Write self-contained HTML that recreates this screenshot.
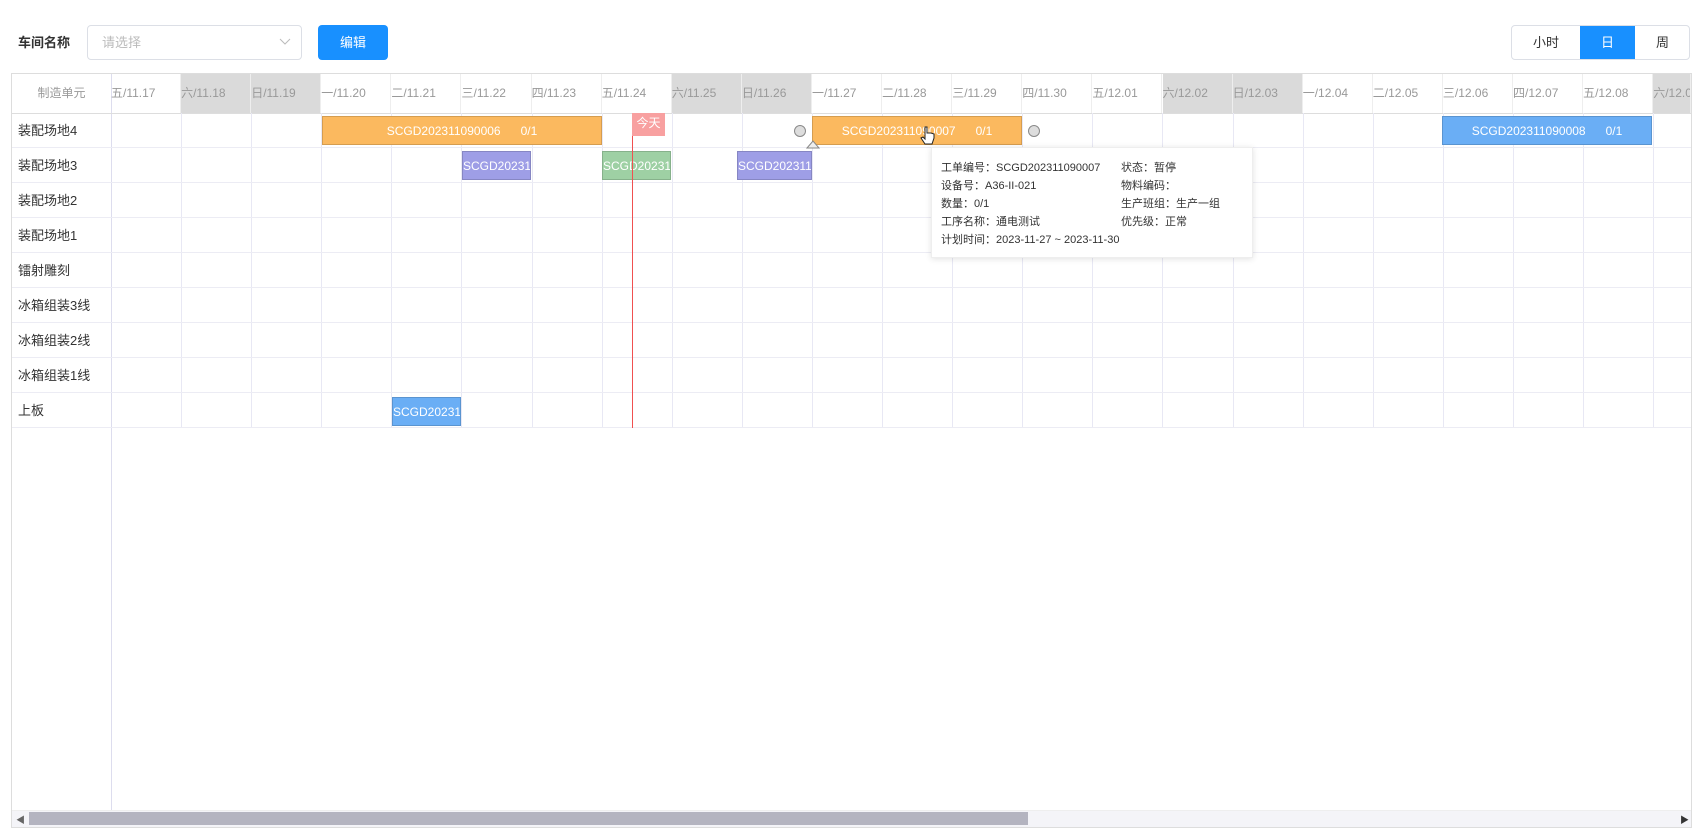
<!DOCTYPE html>
<html><head><meta charset="utf-8"><style>
*{box-sizing:border-box;margin:0;padding:0}
body{width:1706px;height:838px;background:#fff;font-family:"Liberation Sans","Noto Sans CJK SC",sans-serif;position:relative;overflow:hidden;font-size:13px;color:#333}
.a{position:absolute}
.bar{position:absolute;color:#fff;font-size:12px;line-height:28px;white-space:nowrap;overflow:hidden;text-align:center;border:1px solid rgba(0,0,0,.15)}
.hd{position:absolute;top:74px;height:39px;width:70px;line-height:39px;color:#999;font-size:12px;border-right:1px solid #eee;white-space:nowrap;overflow:hidden}
.lab{position:absolute;left:18px;font-size:13px;color:#333;line-height:35px}
.tt{position:absolute;font-size:11px;color:#333;white-space:nowrap}
</style></head><body>
<div class="a" style="left:18px;top:34px;font-size:13px;font-weight:bold;color:#333;line-height:18px">车间名称</div>
<div class="a" style="left:87px;top:25px;width:215px;height:35px;border:1px solid #dcdfe6;border-radius:4px"></div>
<div class="a" style="left:102px;top:34px;color:#bbb;font-size:13px;line-height:18px">请选择</div>
<svg class="a" style="left:279px;top:38px" width="12" height="8"><path d="M1 1 L6 6 L11 1" fill="none" stroke="#bbb" stroke-width="1"/></svg>
<div class="a" style="left:318px;top:25px;width:70px;height:35px;background:#1890ff;border-radius:4px;color:#fff;text-align:center;line-height:35px;font-size:13px">编辑</div>
<div class="a" style="left:1511px;top:25px;width:179px;height:35px;border:1px solid #dcdfe6;border-radius:4px;overflow:hidden">
<div class="a" style="left:0;top:0;width:68px;height:33px;line-height:33px;text-align:center">小时</div>
<div class="a" style="left:68px;top:0;width:55px;height:33px;line-height:33px;text-align:center;background:#1890ff;color:#fff">日</div>
<div class="a" style="left:123px;top:0;width:55px;height:33px;line-height:33px;text-align:center">周</div>
</div>
<!-- table -->
<div class="a" style="left:11px;top:73px;width:1681px;height:755px;border:1px solid #ddd;overflow:hidden" id="t">
</div>
<svg class="a" style="left:11px;top:73px" width="1681" height="755">
<g id="g"></g>
</svg>
<div class="a" style="left:12px;top:74px;width:1679px;height:736px;overflow:hidden">
<div class="a" style="left:0;top:0;width:99px;height:39px;line-height:39px;text-align:center;color:#999;font-size:12px">制造单元</div>
<div class="a" style="left:99px;top:0;width:1px;height:736px;background:#dde"></div>
<div class="a" style="left:0;top:39px;width:1679px;height:1px;background:#ddd"></div>
</div>
<div id="cols"></div>
<script>
var days=["五/11.17","六/11.18","日/11.19","一/11.20","二/11.21","三/11.22","四/11.23","五/11.24","六/11.25","日/11.26","一/11.27","二/11.28","三/11.29","四/11.30","五/12.01","六/12.02","日/12.03","一/12.04","二/12.05","三/12.06","四/12.07","五/12.08","六/12.09"];
var h="";
for(var i=0;i<days.length;i++){var x=111+i*70.1;var we=days[i][0]=="六"||days[i][0]=="日";var w=Math.min(70,1691-x);if(w<=0)break;
h+='<div class="hd" style="left:'+x+'px;width:'+w+'px;'+(we?'background:#dadada;':'')+'">'+days[i]+'</div>';
h+='<div class="a" style="left:'+(x+70)+'px;top:113px;width:1px;height:315px;background:#e8e8f4"></div>';}
for(var r=0;r<9;r++){h+='<div class="a" style="left:12px;top:'+(147+r*35)+'px;width:1679px;height:1px;background:#ececf4"></div>';}
document.getElementById('cols').innerHTML=h;
</script>
<div class="lab" style="top:113px">装配场地4</div>
<div class="lab" style="top:148px">装配场地3</div>
<div class="lab" style="top:183px">装配场地2</div>
<div class="lab" style="top:218px">装配场地1</div>
<div class="lab" style="top:253px">镭射雕刻</div>
<div class="lab" style="top:288px">冰箱组装3线</div>
<div class="lab" style="top:323px">冰箱组装2线</div>
<div class="lab" style="top:358px">冰箱组装1线</div>
<div class="lab" style="top:393px">上板</div>
<div class="bar" style="left:322px;top:116px;width:280px;height:29px;background:#fbb95f">SCGD202311090006&nbsp;&nbsp;&nbsp;&nbsp;&nbsp;&nbsp;0/1</div>
<div class="bar" style="left:812px;top:116px;width:210px;height:29px;background:#fbb95f">SCGD202311090007&nbsp;&nbsp;&nbsp;&nbsp;&nbsp;&nbsp;0/1</div>
<div class="bar" style="left:1442px;top:116px;width:210px;height:29px;background:#6aaef5">SCGD202311090008&nbsp;&nbsp;&nbsp;&nbsp;&nbsp;&nbsp;0/1</div>
<div class="bar" style="left:462px;top:151px;width:69px;height:29px;background:#9e9ee6;text-align:left">SCGD202311090</div>
<div class="bar" style="left:602px;top:151px;width:69px;height:29px;background:#9ed0a4;text-align:left">SCGD202311090</div>
<div class="bar" style="left:737px;top:151px;width:75px;height:29px;background:#9e9ee6;text-align:left">SCGD2023110900</div>
<div class="bar" style="left:392px;top:397px;width:69px;height:29px;background:#6aaef5;text-align:left">SCGD202311090</div>
<div class="a" style="left:632px;top:113px;width:1px;height:315px;background:#f05050"></div>
<div class="a" style="left:632px;top:113px;width:33px;height:23px;background:#f8a0a0;color:#fff;font-size:12px;line-height:20px;text-align:center">今天</div>
<div class="a" style="left:794px;top:125px;width:12px;height:12px;border:1px solid #888;border-radius:50%;background:#ddd"></div>
<div class="a" style="left:1028px;top:125px;width:12px;height:12px;border:1px solid #888;border-radius:50%;background:#ddd"></div>
<svg class="a" style="left:806px;top:139px" width="14" height="10"><path d="M1 9 L7 2 L13 9Z" fill="#eee" stroke="#888"/></svg>
<svg class="a" style="left:920px;top:125px" width="16" height="24"><path d="M5 2 v12 l-2-2 -2 1 4 6 h7 l2-6 v-4 l-3-1 -2 0 -2 0 v-6 z" fill="#fff" stroke="#222"/></svg>
<div class="a" style="left:931px;top:147px;width:322px;height:111px;background:#fff;border:1px solid #eee;box-shadow:0 1px 6px rgba(0,0,0,.12)"></div>
<div class="tt" style="left:941px;top:159px">工单编号：SCGD202311090007</div>
<div class="tt" style="left:1121px;top:159px">状态：暂停</div>
<div class="tt" style="left:941px;top:177px">设备号：A36-II-021</div>
<div class="tt" style="left:1121px;top:177px">物料编码：</div>
<div class="tt" style="left:941px;top:195px">数量：0/1</div>
<div class="tt" style="left:1121px;top:195px">生产班组：生产一组</div>
<div class="tt" style="left:941px;top:213px">工序名称：通电测试</div>
<div class="tt" style="left:1121px;top:213px">优先级：正常</div>
<div class="tt" style="left:941px;top:231px">计划时间：2023-11-27 ~ 2023-11-30</div>
<div class="a" style="left:12px;top:810px;width:1679px;height:17px;background:#f4f4f8;border-top:1px solid #eee"></div>
<div class="a" style="left:29px;top:812px;width:999px;height:13px;background:#b4b4c0"></div>
<div class="a" style="left:16px;top:813px;font-size:9px;color:#666">◀</div>
<div class="a" style="left:1680px;top:813px;font-size:9px;color:#333">▶</div>
</body></html>
